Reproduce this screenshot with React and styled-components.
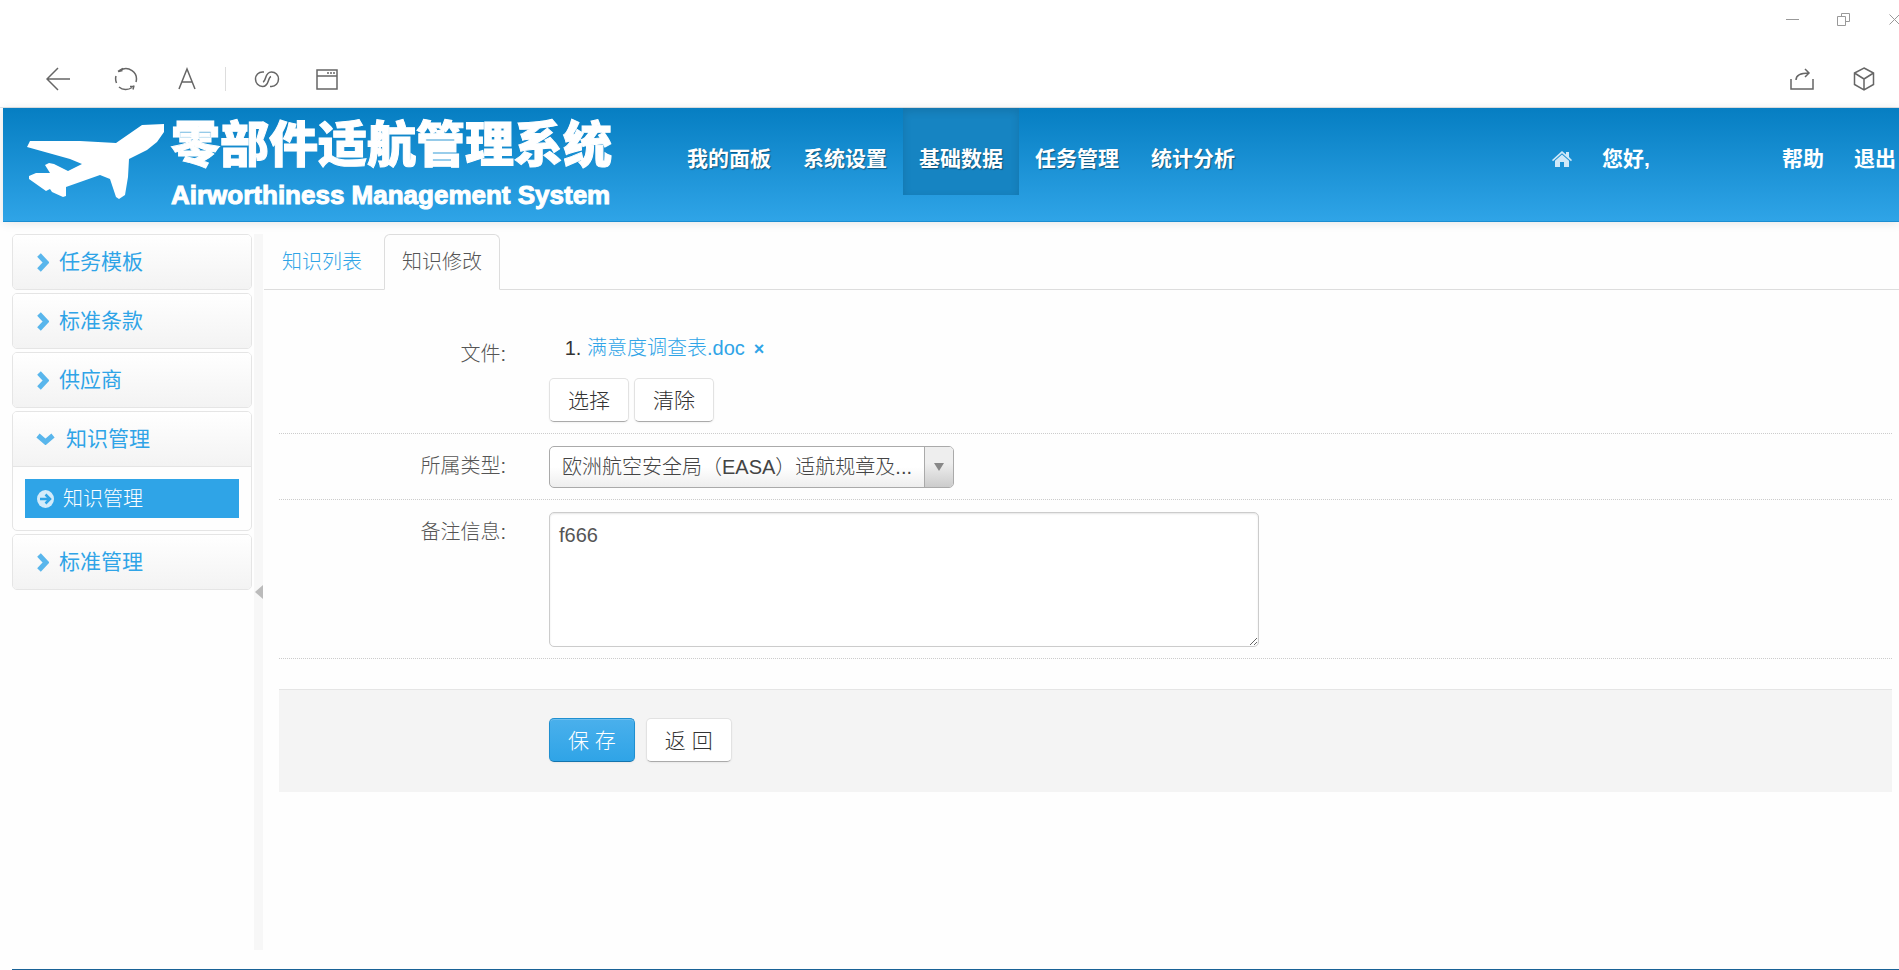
import { useState } from "react";
import styled, { createGlobalStyle } from "styled-components";

const menus = [
  { name: "任务模板" },
  { name: "标准条款" },
  { name: "供应商" },
  { name: "知识管理", children: ["知识管理"] },
  { name: "标准管理" },
];
const navs = ["我的面板", "系统设置", "基础数据", "任务管理", "统计分析"];

//
// browser toolbar on top of the page
const Browser = () => {
  return (
    <BrowserBar>
      <WindowButtons>
        <IconButton aria-label="minimize">
          <Icon width="13" height="13" viewBox="0 0 13 13" $light>
            <path d="M0 6.5h13" />
          </Icon>
        </IconButton>
        <IconButton aria-label="restore">
          <Icon width="13" height="13" viewBox="0 0 13 13" $light>
            <path d="M.5 3.5h8v9h-8zM4.5 3.5v-3h8v8h-4" />
          </Icon>
        </IconButton>
        <IconButton aria-label="close">
          <Icon width="13" height="13" viewBox="0 0 13 13" $light>
            <path d="M1.500 1.500l10 10M11.500 1.500l-10 10" />
          </Icon>
        </IconButton>
      </WindowButtons>
      <Tools>
        <LeftTools>
          <IconButton aria-label="back" $width={68}>
            <Icon width="24" height="24" viewBox="0 0 24 24">
              <path d="M24 12H1M12 1L1 12l11 11" />
            </Icon>
          </IconButton>
          <IconButton aria-label="refresh" $width={68}>
            <Icon width="24" height="24" viewBox="0 0 24 24">
              <path d="M2.500 16A10.500 10.500 0 0 1 2 9M6 3.500a10.500 10.500 0 0 1 16 11.500M18 20.500a10.500 10.500 0 0 1-13-.500" />
              <path d="M4 4.500l5-3M4.500 4.500l4-1M20 19.500l-4 0M20 18.500l-1 4" />
            </Icon>
          </IconButton>
          <IconButton aria-label="font" $width={54}>
            <Icon width="18" height="24" viewBox="0 0 18 24">
              <path d="M1 22L9 2l8 20M4 15h10" />
            </Icon>
          </IconButton>
          <Line />
          <IconButton aria-label="link" $width={60}>
            <Icon width="26" height="24" viewBox="0 0 26 24">
              <path d="M10 5H8.500C4.500 5 1.500 8 1.500 12s3 7.500 7 7.500c7 0 5-9 8.500-10" />
              <path d="M16 19.500h1.500c4 0 7-3.500 7-7.500s-3-7-7-7c-7 0-5 9-8.500 10" />
            </Icon>
          </IconButton>
          <IconButton aria-label="window" $width={60}>
            <Icon width="22" height="24" viewBox="0 0 22 24">
              <path d="M1 3h20v19H1zM1 9h20M11 6h2M14 6h2M17 6h2" />
            </Icon>
          </IconButton>
        </LeftTools>
        <RightTools>
          <IconButton aria-label="share">
            <Icon width="24" height="24" viewBox="0 0 24 24">
              <path d="M1 12v10h22V12M6 13c0-5 5-7 13-7M15 2l4 4-4 4" />
            </Icon>
          </IconButton>
          <IconButton aria-label="cube">
            <Icon width="22" height="24" viewBox="0 0 22 24">
              <path d="M11 1l9.500 5v11.500L11 23l-9.500-5.500V6zM1.500 6l9.500 6 9.500-6M11 12v11" />
            </Icon>
          </IconButton>
        </RightTools>
      </Tools>
    </BrowserBar>
  );
};

const Header = () => {
  return (
    <HeaderBar>
      <Brand href="#">
        <Plane width="137" height="75" viewBox="0 0 137 75" fill="#fff">
          <path d="M137 0v8l-7 10-10 8-18 9-1 18-3 18-6 4-3-2-6-18-10-4-34 12 0 9-3 1-11-5-2-3-4 2L2 55v-3l7-3h14l-5-8 4-2 5 1 14 7 14-7-12-5L0 23l3-6 50 0 36 2 26-18z" />
        </Plane>
        <BrandText>
          <BrandName>零部件适航管理系统</BrandName>
          <BrandSub>Airworthiness Management System</BrandSub>
        </BrandText>
      </Brand>
      <Nav>
        {navs.map((nav) => (
          <NavLink key={nav} href="#" $active={nav === "基础数据"}>
            {nav}
          </NavLink>
        ))}
      </Nav>
      <UserNav>
        <HomeLink href="#" aria-label="主页">
          <svg width="20" height="16" viewBox="0 0 20 16" fill="currentColor">
            <path d="M10 0l4 3.500V1h3v5l3 3-1 1.200-9-8-9 8L0 9z" />
            <path d="M10 3.500l7 6.200V16h-5v-5H8v5H3V9.700z" />
          </svg>
        </HomeLink>
        <Hello href="#">您好,</Hello>
        <UserLink href="#">帮助</UserLink>
        <UserLink href="#">退出</UserLink>
      </UserNav>
    </HeaderBar>
  );
};

const Sidebar = () => {
  return (
    <Side>
      {menus.map((menu) => (
        <Group key={menu.name}>
          <GroupTitle href="#" $open={!!menu.children}>
            {menu.children ? (
              <Chevron width="19" height="12" viewBox="0 0 19 12">
                <path d="M2 2.500l7.500 6.500L17 2.500" />
              </Chevron>
            ) : (
              <Chevron width="13" height="19" viewBox="0 0 13 19">
                <path d="M3 2l7 7.500L3 17" />
              </Chevron>
            )}
            {menu.name}
          </GroupTitle>
          {menu.children && (
            <GroupBody>
              {menu.children.map((child) => (
                <SubLink key={child} href="#">
                  <svg width="17" height="18" viewBox="0 0 17 18">
                    <ellipse cx="8.500" cy="9" rx="8.500" ry="9" fill="#d3ebfa" />
                    <path
                      d="M3 9h10M8.500 4.500L13 9l-4.500 4.500"
                      fill="none"
                      stroke="#2fa4e7"
                      strokeWidth="2.500"
                    />
                  </svg>
                  {child}
                </SubLink>
              ))}
            </GroupBody>
          )}
        </Group>
      ))}
    </Side>
  );
};

const KnowledgeForm = () => {
  const [remarks, setRemarks] = useState("f666");
  const [files, setFiles] = useState(["满意度调查表.doc"]);

  return (
    <Form onSubmit={(e) => e.preventDefault()}>
      <FormRow>
        <Label as="span">文件:</Label>
        <div>
          <Files>
            {files.map((file) => (
              <li key={file}>
                <a href="#">{file}</a>
                <Remove
                  type="button"
                  aria-label="删除"
                  onClick={() => setFiles(files.filter((f) => f !== file))}
                >
                  ×
                </Remove>
              </li>
            ))}
          </Files>
          <FileButtons>
            <Button type="button">选择</Button>
            <Button type="button" onClick={() => setFiles([])}>
              清除
            </Button>
          </FileButtons>
        </div>
      </FormRow>
      <FormRow>
        <Label htmlFor="type">所属类型:</Label>
        <SelectBox>
          <Select id="type">
            <option>欧洲航空安全局（EASA）适航规章及...</option>
          </Select>
          <SelectArrow>
            <svg width="10" height="8" viewBox="0 0 10 8" fill="#888">
              <path d="M0 0h10L5 8z" />
            </svg>
          </SelectArrow>
        </SelectBox>
      </FormRow>
      <FormRow>
        <Label htmlFor="remarks">备注信息:</Label>
        <Textarea
          id="remarks"
          value={remarks}
          onChange={(e) => setRemarks(e.target.value)}
        />
      </FormRow>
      <Actions>
        <Button type="submit" $primary>
          保 存
        </Button>
        <Button type="button">返 回</Button>
      </Actions>
    </Form>
  );
};

const App = () => {
  return (
    <Page>
      <GlobalStyle />
      <Browser />
      <Header />
      <Main>
        <Sidebar />
        <Splitter aria-label="收起菜单">
          <svg width="8" height="14" viewBox="0 0 8 14" fill="#bbb">
            <path d="M8 0v14L0 7z" />
          </svg>
        </Splitter>
        <Content>
          <Tabs>
            <Tab href="#">知识列表</Tab>
            <Tab href="#" $active>
              知识修改
            </Tab>
          </Tabs>
          <KnowledgeForm />
        </Content>
      </Main>
      <Footer />
    </Page>
  );
};

const GlobalStyle = createGlobalStyle`
  * {
    box-sizing: border-box;
  }
  body {
    margin: 0;
    background: #fefefe;
    color: #333;
    font-family: "Liberation Sans", "Noto Sans CJK SC", sans-serif;
    font-size: 20px;
    font-weight: 300;
    line-height: 28px;
    overflow-x: hidden;
  }
  a {
    color: #2fa4e7;
    text-decoration: none;
  }
  button, select, textarea {
    font-family: inherit;
    font-weight: inherit;
    color: inherit;
  }
`;
const Page = styled.div`
  display: flex;
  flex-direction: column;
  min-height: 100vh;
`;
const BrowserBar = styled.div`
  height: 108px;
  border-bottom: 1px solid #dfe3e6;
  background: #fff;
`;
const WindowButtons = styled.div`
  display: flex;
  justify-content: flex-end;
  align-items: center;
  gap: 38px;
  height: 39px;
  margin-right: -2px;
`;
const Tools = styled.div`
  display: flex;
  justify-content: space-between;
  align-items: center;
  height: 80px;
  padding: 0 24px;
`;
const LeftTools = styled.div`
  display: flex;
  align-items: center;
`;
const RightTools = styled(LeftTools)`
  gap: 39px;
`;
const IconButton = styled.button`
  display: flex;
  justify-content: center;
  width: ${(props) => (props.$width ? `${props.$width}px` : "auto")};
  border: none;
  background: none;
  padding: 0;
`;
const Icon = styled.svg`
  fill: none;
  stroke: ${(props) => (props.$light ? "#999" : "#666")};
  stroke-width: ${(props) => (props.$light ? 1 : 1.5)};
`;
const Line = styled.span`
  width: 1px;
  height: 24px;
  margin: 0 11px;
  background: #ddd;
`;
const HeaderBar = styled.header`
  display: flex;
  height: 114px;
  margin-left: 3px;
  background: linear-gradient(#067ec2, #2fa4e7);
  border-bottom: 1px solid #1b8ed2;
  box-shadow: 0 1px 10px rgba(0, 0, 0, 0.1);
`;
const Brand = styled.a`
  display: flex;
  flex-shrink: 0;
  gap: 7px;
  padding: 16px 0 0 24px;
  width: 668px;
`;
const Plane = styled.svg`
  flex-shrink: 0;
`;
const BrandText = styled.span`
  display: flex;
  flex-direction: column;
  margin-top: -14px;
  color: #fff;
  white-space: nowrap;
`;
const BrandName = styled.span`
  font-family: "Noto Sans CJK SC", sans-serif;
  font-size: 49px;
  font-weight: 900;
  line-height: 62px;
  -webkit-text-stroke: 1px #fff;
`;
const BrandSub = styled.span`
  font-size: 26px;
  font-weight: bold;
  line-height: 46px;
  -webkit-text-stroke: 1px #fff;
`;
const Nav = styled.nav`
  display: flex;
`;
const NavLink = styled.a`
  height: 87px;
  padding: 0 16px;
  color: #fff;
  font-size: 21px;
  font-weight: bold;
  line-height: 101px;
  white-space: nowrap;
  text-shadow: 1px 1px 1px rgba(0, 0, 0, 0.4);
  ${(props) =>
    props.$active &&
    `background: #1684c2;
    box-shadow: inset 0 3px 8px rgba(0, 0, 0, 0.125);`}
`;
const UserNav = styled.nav`
  display: flex;
  margin-left: auto;
  padding-right: 3px;
  gap: 30px;
`;
const UserLink = styled(NavLink)`
  padding: 0;
  text-shadow: none;
`;
const HomeLink = styled(UserLink)`
  display: flex;
  align-items: center;
  padding-top: 14px;
  color: #cfe8f8;
`;
const Hello = styled(UserLink)`
  width: 150px;
`;
const Main = styled.main`
  display: flex;
  flex: 1;
  padding: 12px 0 19px 12px;
`;
const Side = styled.aside`
  display: flex;
  flex-direction: column;
  gap: 3px;
  width: 240px;
  flex-shrink: 0;
`;
const Group = styled.div`
  border: 1px solid #e5e5e5;
  border-radius: 5px;
  overflow: hidden;
`;
const GroupTitle = styled.a`
  display: flex;
  align-items: center;
  gap: ${(props) => (props.$open ? 11 : 10)}px;
  height: 54px;
  padding-left: 23px;
  background: linear-gradient(#fff, #f3f3f3);
  font-size: 21px;
  font-weight: 400;
`;
const Chevron = styled.svg`
  fill: none;
  stroke: #59b6ec;
  stroke-width: 5;
`;
const GroupBody = styled.div`
  padding: 12px;
  border-top: 1px solid #e5e5e5;
`;
const SubLink = styled.a`
  display: flex;
  align-items: center;
  gap: 9px;
  height: 39px;
  padding-left: 12px;
  background: #2fa4e7;
  color: #fff;
`;
const Splitter = styled.button`
  display: flex;
  align-items: center;
  justify-content: flex-end;
  width: 9px;
  margin-left: 2px;
  padding: 0;
  border: none;
  background: #f7f7f7;
`;
const Content = styled.section`
  flex: 1;
  margin-left: 1px;
`;
const Tabs = styled.div`
  display: flex;
  gap: 4px;
  height: 56px;
  border-bottom: 1px solid #ddd;
`;
const Tab = styled.a`
  height: 56px;
  padding: 0 17px;
  border: 1px solid transparent;
  line-height: 54px;
  ${(props) =>
    props.$active &&
    `border-color: #ddd #ddd #fefefe;
    border-radius: 6px 6px 0 0;
    background: #fefefe;
    color: #555;`}
`;
const Form = styled.form`
  margin: 32px 7px 0 15px;
`;
const FormRow = styled.div`
  display: flex;
  gap: 43px;
  padding: 12px 0 11px;
  border-bottom: 1px dotted #ccc;
`;
const Label = styled.label`
  width: 227px;
  padding-top: 6px;
  text-align: right;
  color: #555;
`;
const Files = styled.ol`
  margin: 0 0 16px;
  padding-left: 38px;
`;
const Remove = styled.button`
  margin-left: 9px;
  padding: 0;
  border: none;
  background: none;
  color: #2fa4e7;
  font-size: 18px;
  font-weight: bold;
`;
const FileButtons = styled.div`
  display: flex;
  gap: 5px;
`;
const Button = styled.button`
  height: 44px;
  padding: 0 18px 3px;
  border: 1px solid ${(props) => (props.$primary ? "#1f8fd0" : "#e2e2e2")};
  border-bottom-color: ${(props) => (props.$primary ? "#1474ad" : "#aaa")};
  border-radius: 5px;
  background: ${(props) =>
    props.$primary ? "linear-gradient(#4ab0ec, #2fa4e7)" : "#fff"};
  color: ${(props) => (props.$primary ? "#fff" : "#333")};
  font-size: 21px;
  box-shadow: inset 0 1px 0 rgba(255, 255, 255, 0.2),
    0 1px 2px rgba(0, 0, 0, 0.05);
`;
const SelectBox = styled.div`
  position: relative;
  width: 405px;
`;
const Select = styled.select`
  appearance: none;
  display: block;
  width: 100%;
  height: 42px;
  padding: 0 36px 0 12px;
  border: 1px solid #aaa;
  border-radius: 5px;
  background: linear-gradient(#fff 50%, #eee);
  color: #444;
  font-size: 20px;
`;
const SelectArrow = styled.span`
  position: absolute;
  top: 1px;
  right: 1px;
  bottom: 1px;
  display: flex;
  align-items: center;
  justify-content: center;
  width: 29px;
  border-left: 1px solid #aaa;
  border-radius: 0 4px 4px 0;
  background: linear-gradient(#eee 40%, #ccc);
  pointer-events: none;
`;
const Textarea = styled.textarea`
  display: block;
  width: 710px;
  height: 135px;
  padding: 8px 9px;
  border: 1px solid #ccc;
  border-radius: 5px;
  background: #fff;
  color: #555;
  font-size: 20px;
  line-height: 28px;
  box-shadow: inset 0 1px 2px rgba(0, 0, 0, 0.1);
`;
const Actions = styled.div`
  display: flex;
  gap: 11px;
  margin-top: 30px;
  padding: 28px 0 30px 270px;
  border-top: 1px solid #e5e5e5;
  background: #f4f4f4;
`;
const Footer = styled.footer`
  margin-left: 12px;
  border-top: 1px solid #1a6296;
`;
export default App;
